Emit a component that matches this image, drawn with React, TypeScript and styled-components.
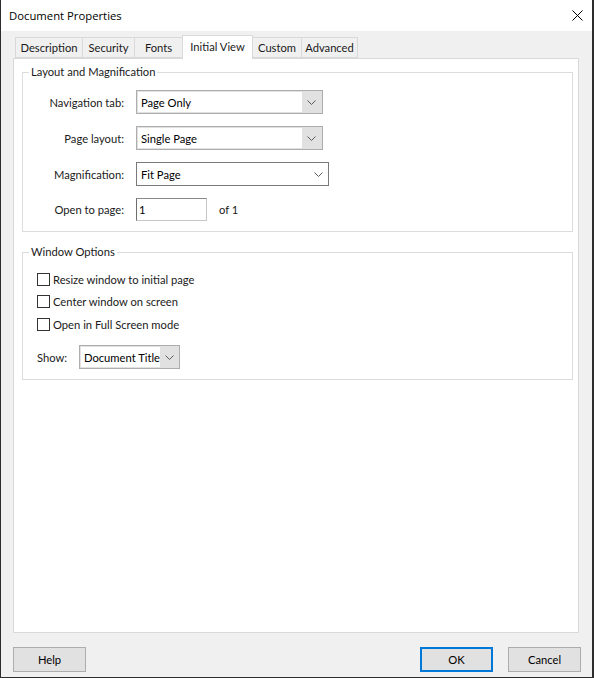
import React from "react";
import styled, { createGlobalStyle } from "styled-components";

const GlobalStyle = createGlobalStyle`
  html, body { margin: 0; padding: 0; background: #2b2b2b; }
  body {
    font-family: Lato, "Open Sans", "Liberation Sans", sans-serif;
    font-size: 11.2px;
    color: #1a1a1a;
  }
  * { box-sizing: border-box; }
`;

const Window = styled.div`
  width: 594px;
  height: 678px;
  display: flex;
  flex-direction: column;
  background: #f0f0f0;
  border-left: 1px solid #2d2d2d;
  border-right: 2px solid #2d2d2d;
  border-bottom: 1px solid #2d2d2d;
`;

const TitleBar = styled.div`
  height: 31px;
  flex: none;
  background: #ffffff;
  display: flex;
  align-items: center;
  justify-content: space-between;
  padding: 0 9px 0 8px;
`;

const Title = styled.div`
  font-family: "Open Sans", "Noto Sans", sans-serif;
  font-size: 11.3px;
  color: #000;
`;

const CloseIcon = styled.svg`
  width: 11px;
  height: 11px;
  display: block;
`;

const Body = styled.div`
  flex: 1;
  display: flex;
  flex-direction: column;
  padding: 4px 13px 0 12px;
  min-height: 0;
`;

const TabList = styled.div`
  height: 23px;
  flex: none;
  display: flex;
  align-items: flex-end;
  padding-left: 2px;
  position: relative;
  z-index: 1;
`;

const Tab = styled.div<{ $w: number; $active?: boolean }>`
  width: ${(p) => p.$w}px;
  height: ${(p) => (p.$active ? 24 : 21)}px;
  margin-bottom: ${(p) => (p.$active ? -1 : 0)}px;
  margin-left: -1px;
  display: flex;
  align-items: center;
  justify-content: center;
  padding-bottom: ${(p) => (p.$active ? 3 : 1)}px;
  background: ${(p) => (p.$active ? "#ffffff" : "#f0f0f0")};
  border: 1px solid #d9d9d9;
  border-bottom: ${(p) => (p.$active ? "none" : "1px solid #d9d9d9")};
  position: relative;
  z-index: ${(p) => (p.$active ? 2 : 1)};
  white-space: nowrap;
  &:first-child { margin-left: 0; }
`;

const Panel = styled.div`
  flex: 1;
  background: #ffffff;
  border: 1px solid #d9d9d9;
  padding: 5px 5px 0 8px;
  display: flex;
  flex-direction: column;
  gap: 12px;
`;

const Group = styled.fieldset`
  margin: 0;
  border: 1px solid #dcdcdc;
  padding: 0;
  min-width: 0;
`;

const Legend = styled.legend`
  margin-left: 6px;
  padding: 0 2px 0 2px;
  line-height: 16px;
  height: 16px;
`;

const FormGrid = styled.div`
  display: flex;
  flex-direction: column;
  gap: 12px;
  padding: 10px 0 10px 0;
`;

const FormRow = styled.div`
  display: grid;
  grid-template-columns: 101px auto auto 1fr;
  column-gap: 12px;
  align-items: center;
`;

const Label = styled.div`
  text-align: right;
  white-space: nowrap;
`;

const Combo = styled.div<{ $w: number; $variant: "gray" | "white" }>`
  width: ${(p) => p.$w}px;
  height: 24px;
  display: flex;
  align-items: stretch;
  background: ${(p) => (p.$variant === "gray" ? "#e1e1e1" : "#ffffff")};
  border: 1px solid ${(p) => (p.$variant === "gray" ? "#adadad" : "#7a7a7a")};
  padding: ${(p) => (p.$variant === "gray" ? "1px" : "0")};
`;

const ComboValue = styled.div<{ $variant: "gray" | "white" }>`
  flex: 1;
  min-width: 0;
  background: #ffffff;
  display: flex;
  align-items: center;
  padding-left: ${(p) => (p.$variant === "gray" ? 3 : 4)}px;
  white-space: nowrap;
  overflow: hidden;
  color: #000;
`;

const ComboArrow = styled.div<{ $aw: number }>`
  width: ${(p) => p.$aw}px;
  flex: none;
  display: flex;
  align-items: center;
  justify-content: center;
`;

const TextInput = styled.div`
  width: 71px;
  height: 23px;
  background: #fff;
  border: 1px solid;
  border-color: #8a8a8a #c6c6c6 #c6c6c6 #6e6e6e;
  display: flex;
  align-items: center;
  padding-left: 2px;
  color: #000;
`;

const OfText = styled.div`
  white-space: nowrap;
`;

const OptionsBody = styled.div`
  display: flex;
  flex-direction: column;
  padding: 11px 0 10px 14px;
`;

const CheckList = styled.div`
  display: flex;
  flex-direction: column;
  gap: 6.5px;
`;

const CheckRow = styled.label`
  display: flex;
  align-items: center;
  gap: 3px;
  height: 16px;
`;

const Box = styled.span`
  width: 13px;
  height: 13px;
  flex: none;
  border: 1px solid #333333;
  background: #ffffff;
`;

const ShowRow = styled.div`
  display: flex;
  align-items: center;
  margin-top: 13px;
`;

const ShowLabel = styled.div`
  width: 42px;
`;

const Footer = styled.div`
  flex: none;
  display: flex;
  align-items: center;
  padding: 14px 11px 5px 12px;
  height: 44px;
`;

const Spacer = styled.div`
  flex: 1;
`;

const Button = styled.button<{ $primary?: boolean }>`
  width: 73px;
  height: 25px;
  margin-left: ${(p) => (p.$primary ? 0 : 15)}px;
  font-family: inherit;
  font-size: 11.2px;
  color: #000;
  background: #e1e1e1;
  border: ${(p) => (p.$primary ? "2px solid #0078d7" : "1px solid #adadad")};
  padding: 0;
  &:first-child { margin-left: 0; }
`;

const Chevron = () => (
  <svg width="9" height="5" viewBox="0 0 9 5">
    <polyline points="0.5,0.5 4.5,4.5 8.5,0.5" fill="none" stroke="#5a5a5a" strokeWidth="1" />
  </svg>
);

const tabs = [
  { label: "Description", w: 68 },
  { label: "Security", w: 53 },
  { label: "Fonts", w: 49 },
  { label: "Initial View", w: 71, active: true },
  { label: "Custom", w: 50 },
  { label: "Advanced", w: 57 },
];

export default function App() {
  return (
    <>
      <GlobalStyle />
      <Window>
        <TitleBar>
          <Title>Document Properties</Title>
          <CloseIcon viewBox="0 0 11 11">
            <line x1="0.5" y1="0.5" x2="10.5" y2="10.5" stroke="#000" strokeWidth="1" />
            <line x1="10.5" y1="0.5" x2="0.5" y2="10.5" stroke="#000" strokeWidth="1" />
          </CloseIcon>
        </TitleBar>
        <Body>
          <TabList>
            {tabs.map((t) => (
              <Tab key={t.label} $w={t.w} $active={t.active}>
                {t.label}
              </Tab>
            ))}
          </TabList>
          <Panel>
            <Group>
              <Legend>Layout and Magnification</Legend>
              <FormGrid>
                <FormRow>
                  <Label>Navigation tab:</Label>
                  <Combo $w={187} $variant="gray">
                    <ComboValue $variant="gray">Page Only</ComboValue>
                    <ComboArrow $aw={19}><Chevron /></ComboArrow>
                  </Combo>
                </FormRow>
                <FormRow>
                  <Label>Page layout:</Label>
                  <Combo $w={187} $variant="gray">
                    <ComboValue $variant="gray">Single Page</ComboValue>
                    <ComboArrow $aw={19}><Chevron /></ComboArrow>
                  </Combo>
                </FormRow>
                <FormRow>
                  <Label>Magnification:</Label>
                  <Combo $w={193} $variant="white">
                    <ComboValue $variant="white">Fit Page</ComboValue>
                    <ComboArrow $aw={20}><Chevron /></ComboArrow>
                  </Combo>
                </FormRow>
                <FormRow>
                  <Label>Open to page:</Label>
                  <TextInput>1</TextInput>
                  <OfText>of 1</OfText>
                </FormRow>
              </FormGrid>
            </Group>
            <Group>
              <Legend>Window Options</Legend>
              <OptionsBody>
                <CheckList>
                  <CheckRow><Box />Resize window to initial page</CheckRow>
                  <CheckRow><Box />Center window on screen</CheckRow>
                  <CheckRow><Box />Open in Full Screen mode</CheckRow>
                </CheckList>
                <ShowRow>
                  <ShowLabel>Show:</ShowLabel>
                  <Combo $w={101} $variant="gray">
                    <ComboValue $variant="gray">Document Title</ComboValue>
                    <ComboArrow $aw={18}><Chevron /></ComboArrow>
                  </Combo>
                </ShowRow>
              </OptionsBody>
            </Group>
          </Panel>
        </Body>
        <Footer>
          <Button>Help</Button>
          <Spacer />
          <Button $primary>OK</Button>
          <Button>Cancel</Button>
        </Footer>
      </Window>
    </>
  );
}
